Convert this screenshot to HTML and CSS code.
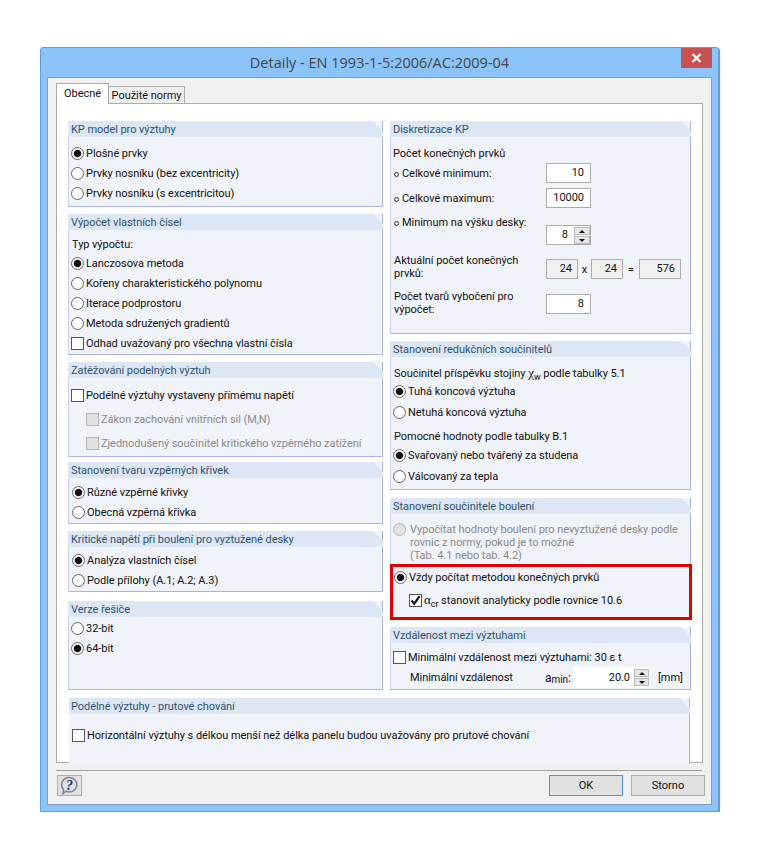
FILE: index.html
```html
<!DOCTYPE html>
<html lang="cs">

<head>
    <meta charset="UTF-8">
    <title>Detaily - EN 1993-1-5:2006/AC:2009-04</title>
    <link rel="stylesheet" href="styles.css">
</head>

<body>
    <div class="window">
        <div class="titlebar">
            <span class="title">Detaily - EN 1993-1-5:2006/AC:2009-04</span>
            <button class="close">
                <svg width="11" height="10" viewBox="0 0 11 10"><path d="M1.5 1l8 8M9.5 1l-8 8" stroke="#fff" stroke-width="2.2" fill="none"/></svg>
            </button>
        </div>
        <div class="client">
            <div class="tabs">
                <div class="tab active">Obecné</div>
                <div class="tab">Použité normy</div>
            </div>
            <div class="panel">
                <div class="columns">
                    <div class="column">
                        <div class="group g-kp">
                            <div class="group-head">KP model pro výztuhy</div>
                            <div class="group-body">
                                <div class="row"><span class="radio on"></span>Plošné prvky</div>
                                <div class="row"><span class="radio"></span>Prvky nosníku (bez excentricity)</div>
                                <div class="row"><span class="radio"></span>Prvky nosníku (s excentricitou)</div>
                            </div>
                        </div>
                        <div class="group g-vypocet">
                            <div class="group-head">Výpočet vlastních čísel</div>
                            <div class="group-body">
                                <div class="row short">Typ výpočtu:</div>
                                <div class="row"><span class="radio on"></span>Lanczosova metoda</div>
                                <div class="row"><span class="radio"></span>Kořeny charakteristického polynomu</div>
                                <div class="row"><span class="radio"></span>Iterace podprostoru</div>
                                <div class="row"><span class="radio"></span>Metoda sdružených gradientů</div>
                                <div class="row"><span class="check"></span>Odhad uvažovaný pro všechna vlastní čísla</div>
                            </div>
                        </div>
                        <div class="group g-zatez">
                            <div class="group-head">Zatěžování podelných výztuh</div>
                            <div class="group-body">
                                <div class="row tall"><span class="check"></span>Podélné výztuhy vystaveny přímému napětí</div>
                                <div class="row tall sub disabled"><span class="check"></span>Zákon zachování vnitřních sil (M,N)</div>
                                <div class="row tall sub disabled"><span class="check"></span>Zjednodušený součinitel kritického vzpěrného zatížení</div>
                            </div>
                        </div>
                        <div class="group g-tvar">
                            <div class="group-head">Stanovení tvaru vzpěrných křivek</div>
                            <div class="group-body">
                                <div class="row"><span class="radio on"></span>Různé vzpěrné křivky</div>
                                <div class="row"><span class="radio"></span>Obecná vzpěrná křivka</div>
                            </div>
                        </div>
                        <div class="group g-krit">
                            <div class="group-head">Kritické napětí při boulení pro vyztužené desky</div>
                            <div class="group-body">
                                <div class="row"><span class="radio on"></span>Analýza vlastních čísel</div>
                                <div class="row"><span class="radio"></span>Podle přílohy (A.1; A.2; A.3)</div>
                            </div>
                        </div>
                        <div class="group g-verze">
                            <div class="group-head">Verze řešiče</div>
                            <div class="group-body">
                                <div class="row"><span class="radio"></span>32-bit</div>
                                <div class="row"><span class="radio on"></span>64-bit</div>
                            </div>
                        </div>
                    </div>
                    <div class="column right">
                        <div class="group g-disk">
                            <div class="group-head">Diskretizace KP</div>
                            <div class="group-body">
                                <div class="row">Počet konečných prvků</div>
                                <div class="field-row">
                                    <span class="label"><span class="bullet"></span>Celkové minimum:</span>
                                    <span class="input">10</span>
                                </div>
                                <div class="field-row">
                                    <span class="label"><span class="bullet"></span>Celkové maximum:</span>
                                    <span class="input">10000</span>
                                </div>
                                <div class="field-row spin-row">
                                    <span class="label"><span class="bullet"></span>Minimum na výšku desky:</span>
                                    <span class="input spin">8
                                        <span class="spinner">
                                            <span class="spin-btn"><i class="up"></i></span>
                                            <span class="spin-btn"><i class="down"></i></span>
                                        </span>
                                    </span>
                                </div>
                                <div class="field-row calc-row">
                                    <span class="label two-line">Aktuální počet konečných prvků:</span>
                                    <span class="calc">
                                        <span class="input ro w32">24</span><span class="op">x</span>
                                        <span class="input ro w32">24</span><span class="op eq">=</span>
                                        <span class="input ro w42">576</span>
                                    </span>
                                </div>
                                <div class="field-row shapes-row">
                                    <span class="label two-line">Počet tvarů vybočení pro výpočet:</span>
                                    <span class="input">8</span>
                                </div>
                            </div>
                        </div>
                        <div class="group g-redukce">
                            <div class="group-head">Stanovení redukčních součinitelů</div>
                            <div class="group-body">
                                <div class="row text-row"><span>Součinitel příspěvku stojiny <span class="sym">χ</span><sub>w</sub> podle tabulky 5.1</span></div>
                                <div class="row wide"><span class="radio on"></span>Tuhá koncová výztuha</div>
                                <div class="row wide"><span class="radio"></span>Netuhá koncová výztuha</div>
                                <div class="row text-row second">Pomocné hodnoty podle tabulky B.1</div>
                                <div class="row wide"><span class="radio on"></span>Svařovaný nebo tvářený za studena</div>
                                <div class="row wide"><span class="radio"></span>Válcovaný za tepla</div>
                            </div>
                        </div>
                        <div class="group g-bouleni">
                            <div class="group-head">Stanovení součinitele boulení</div>
                            <div class="group-body">
                                <div class="multi disabled">
                                    <span class="radio"></span>
                                    <span>Vypočítat hodnoty boulení pro nevyztužené desky podle<br>rovnic z normy, pokud je to možné<br>(Tab. 4.1 nebo tab. 4.2)</span>
                                </div>
                                <div class="highlight">
                                    <div class="row"><span class="radio on"></span>Vždy počítat metodou konečných prvků</div>
                                    <div class="row sub-check">
                                        <span class="check checked">
                                            <svg width="11" height="11" viewBox="0 0 11 11"><path d="M1.5 5.5l2.8 3.2 5.2-7.5" stroke="#111" stroke-width="2.2" fill="none"/></svg>
                                        </span>
                                        <span><span class="sym">α</span><sub>cr</sub> stanovit analyticky podle rovnice 10.6</span>
                                    </div>
                                </div>
                            </div>
                        </div>
                        <div class="group g-vzdal">
                            <div class="group-head">Vzdálenost mezi výztuhami</div>
                            <div class="group-body">
                                <div class="row"><span class="check"></span>Minimální vzdálenost mezi výztuhami: 30 ε t</div>
                                <div class="min-row">
                                    <span class="min-label">Minimální vzdálenost</span>
                                    <span class="amin">a<sub>min</sub>:</span>
                                    <span class="input flat spin">20.0
                                        <span class="spinner">
                                            <span class="spin-btn"><i class="up"></i></span>
                                            <span class="spin-btn"><i class="down"></i></span>
                                        </span>
                                    </span>
                                    <span class="unit">[mm]</span>
                                </div>
                            </div>
                        </div>
                    </div>
                </div>
                <div class="group g-prut">
                    <div class="group-head">Podélné výztuhy - prutové chování</div>
                    <div class="group-body">
                        <div class="row"><span class="check"></span>Horizontální výztuhy s délkou menší než délka panelu budou uvažovány pro prutové chování</div>
                    </div>
                </div>
            </div>
            <div class="separator"></div>
            <div class="footer">
                <button class="help">
                    <svg width="21" height="19" viewBox="0 0 21 19">
                        <path d="M10.5 1.5a7.5 7.2 0 1 1-3.4 13.7L4 17.5l.6-4A7.5 7.2 0 0 1 10.5 1.5z" fill="#dfe2ea" stroke="#7f8596" stroke-width="1.6"/>
                        <text x="10.5" y="13.5" text-anchor="middle" class="help-mark">?</text>
                    </svg>
                </button>
                <div class="actions">
                    <button class="btn default">OK</button>
                    <button class="btn">Storno</button>
                </div>
            </div>
        </div>
    </div>
</body>

</html>
```

FILE: styles.css
```css
* {
    padding: 0;
    margin: 0;
    box-sizing: border-box;
}

body {
    background: #fff;
    font-family: Roboto, "Liberation Sans", sans-serif;
    font-size: 11px;
    letter-spacing: -0.05px;
    color: #111;
    padding: 47px 0 0 40px;
}

.window {
    width: 679px;
    height: 765px;
    background: #8ac4fa;
    border: 1px solid #5f9ed8;
    border-radius: 3px 3px 0 0;
    box-shadow: 1px 1px 1px #6d8aa5;
    padding: 0 6px 6px;
}

.titlebar {
    height: 29px;
    display: flex;
    align-items: center;
    justify-content: center;
    position: relative;
}

.title {
    font-family: "Open Sans", sans-serif;
    font-size: 14.5px;
    letter-spacing: 0;
    color: #444;
}

.close {
    position: absolute;
    top: 0;
    right: 0;
    width: 31px;
    height: 20px;
    background: #c75050;
    border: none;
    display: flex;
    align-items: center;
    justify-content: center;
}

.client {
    height: 728px;
    background: #f0f0f0;
    border: 1px solid #7f9db9;
    padding: 5px 8px 0;
}

.tabs {
    display: flex;
    align-items: flex-end;
    height: 20px;
    position: relative;
    z-index: 1;
}

.tab {
    height: 17px;
    width: 76px;
    border: 1px solid #acacac;
    border-left: none;
    border-bottom: none;
    background: #f0f0f0;
    text-align: center;
    line-height: 17px;
    white-space: nowrap;
}

.tab.active {
    height: 21px;
    width: 53px;
    margin-bottom: -1px;
    background: #fff;
    border-left: 1px solid #acacac;
    line-height: 19px;
}

.panel {
    height: 660px;
    background: #fff;
    border: 1px solid #acacac;
    padding: 17px 11px 0;
}

.columns {
    display: flex;
    gap: 7px;
}

.column {
    width: 315px;
    display: flex;
    flex-direction: column;
    gap: 7px;
}

.column.right {
    width: 301px;
}

.group {
    background: #f0f3f9;
    display: flex;
    flex-direction: column;
    border-left: 1px solid #c6d0ec;
    border-right: 1px solid #a9b4e6;
    border-bottom: 1px solid #a9b4e6;
    position: relative;
}

.group-head {
    height: 16px;
    margin: 0 -1px;
    background: #dce6f4;
    color: #2f5372;
    line-height: 17px;
    padding-left: 3px;
    clip-path: polygon(0 0, calc(100% - 10px) 0, 100% 10px, 100% 100%, 0 100%);
    flex: none;
}

.group-body {
    flex: 1;
    padding-left: 2px;
}

.row {
    height: 20px;
    display: flex;
    align-items: center;
    white-space: nowrap;
}

.row.short {
    height: 18px;
    padding-left: 1px;
}

.row.tall {
    height: 24px;
}

.row.wide {
    height: 21px;
}

.row.text-row {
    height: 17px;
    padding-left: 1px;
}

.row.second {
    margin-top: 5px;
}

.row.sub {
    padding-left: 15px;
}

.disabled {
    color: #8a8a8a;
}

.radio {
    width: 13px;
    height: 13px;
    flex: none;
    margin-right: 2px;
    border: 1px solid #666;
    border-radius: 50%;
    background: #fff;
}

.radio.on {
    background: radial-gradient(circle, #111 0, #111 3.2px, #fff 4.2px);
}

.disabled .radio {
    background: #e2e2e2;
    border-color: #b5b5b5;
}

.check {
    width: 13px;
    height: 13px;
    flex: none;
    margin-right: 2px;
    border: 1px solid #555;
    background: #fff;
    display: flex;
    align-items: center;
    justify-content: center;
}

.disabled .check {
    background: #e2e2e2;
    border-color: #b5b5b5;
}

.sym {
    font-family: "Liberation Serif", serif;
    font-size: 13px;
}

sub {
    font-size: 9px;
    line-height: 0;
}

/* sizes of the groups, they don't sit at equal gaps in the dialog */
.g-kp { height: 86px; }
.g-kp .group-body { padding-top: 6px; }
.g-vypocet { height: 141px; }
.g-vypocet .group-body { padding-top: 5px; }
.g-zatez { height: 95px; margin-bottom: -2px; }
.g-zatez .group-body { padding-top: 5px; }
.g-tvar { height: 62px; }
.g-tvar .group-body { padding: 4px 0 0 3px; }
.g-krit { height: 61px; }
.g-krit .group-body { padding: 3px 0 0 3px; }
.g-verze { height: 89px; margin-top: 2px; }
.g-verze .group-body { padding-top: 1px; }
.g-disk { height: 213px; }
.g-disk .group-body { padding-top: 6px; }
.g-redukce { height: 149px; }
.g-redukce .group-body { padding-top: 7px; }
.g-bouleni { height: 122px; margin-top: 1px; }
.g-vzdal { height: 63px; }
.g-vzdal .group-body { padding-top: 4px; }
.g-prut { height: 66px; margin: 8px 0 0 1px; border-left: none; border-bottom: none; width: 621px; }
.g-prut .group-head { margin-left: 0; padding-left: 2px; }
.g-prut .group-body { padding: 11px 0 0 3px; }

.field-row {
    display: flex;
    justify-content: space-between;
    padding-right: 99px;
    height: 20px;
    margin-bottom: 5px;
    align-items: center;
}

.label {
    display: flex;
    align-items: center;
    padding-left: 1px;
    white-space: nowrap;
}

.label.two-line {
    display: block;
    width: 140px;
    line-height: 13px;
    white-space: normal;
}

.bullet {
    width: 5px;
    height: 5px;
    border: 1px solid #333;
    border-radius: 50%;
    margin: 2px 3px 0 0;
}

.input {
    width: 45px;
    height: 20px;
    flex: none;
    background: #fff;
    border: 1px solid #acacac;
    text-align: right;
    padding-right: 6px;
    line-height: 18px;
    display: block;
    position: relative;
}

.input.spin {
    padding-right: 22px;
}

.spinner {
    position: absolute;
    top: 1px;
    right: 0;
    width: 16px;
    display: flex;
    flex-direction: column;
    gap: 1px;
}

.spin-btn {
    height: 8px;
    background: #e6e6e6;
    border: 1px solid #b8b8b8;
    display: flex;
    align-items: center;
    justify-content: center;
}

.spin-btn i {
    width: 0;
    height: 0;
    border-left: 3px solid transparent;
    border-right: 3px solid transparent;
}

.spin-btn i.up {
    border-bottom: 3px solid #111;
}

.spin-btn i.down {
    border-top: 3px solid #111;
}

.spin-row {
    height: 33px;
    margin-top: -1px;
    margin-bottom: 9px;
    align-items: flex-start;
}

.spin-row .label {
    height: 20px;
}

.spin-row .input {
    margin-top: 13px;
}

.calc-row {
    height: 26px;
    align-items: flex-start;
    margin-bottom: 10px;
    padding-right: 9px;
}

.calc {
    display: flex;
    align-items: center;
    margin-top: 5px;
}

.input.ro {
    background: #f0f0f0;
    padding-right: 5px;
}

.input.w32 { width: 32px; }
.input.w42 { width: 42px; }

.op {
    width: 13px;
    text-align: center;
}

.op.eq {
    width: 16px;
}

.shapes-row {
    height: 26px;
    align-items: flex-start;
}

.shapes-row .input {
    margin-top: 4px;
}

.multi {
    display: flex;
    gap: 2px;
    line-height: 13px;
    padding-top: 9px;
    height: 50px;
    white-space: nowrap;
}

.highlight {
    height: 56px;
    margin: 0 -2px 0 -3px;
    border: 3px solid #e00000;
    padding: 0 0 0 1px;
    position: relative;
}

.row.sub-check {
    margin-top: 3px;
    padding-left: 15px;
}

.min-row {
    display: flex;
    align-items: center;
    height: 21px;
    padding-left: 17px;
}

.min-label {
    width: 135px;
}

.amin {
    width: 28px;
    font-size: 12px;
    white-space: nowrap;
}

.amin sub {
    vertical-align: -1px;
    font-size: 10px;
}

.input.flat {
    width: 77px;
    height: 21px;
    border: none;
    line-height: 21px;
    padding-right: 20px;
}

.flat .spinner {
    top: 2px;
    right: 1px;
    width: 15px;
}

.unit {
    margin-left: 8px;
}

.separator {
    height: 1px;
    background: #a0a0a0;
    margin-top: 7px;
    width: 646px;
}

.footer {
    display: flex;
    justify-content: space-between;
    padding: 4px 0 0 1px;
    margin-right: -2px;
}

.help {
    width: 25px;
    height: 21px;
    background: #e1e1e1;
    border: 1px solid #adadad;
    display: flex;
    align-items: center;
    justify-content: center;
}

.help-mark {
    font-family: "Liberation Serif", serif;
    font-weight: 700;
    font-style: italic;
    font-size: 14px;
    fill: #1d2f6f;
}

.actions {
    display: flex;
    gap: 8px;
}

.btn {
    width: 74px;
    height: 21px;
    background: #e1e1e1;
    border: 1px solid #adadad;
    font: inherit;
    color: #111;
}

.btn.default {
    border-color: #4a94e0;
}
```
